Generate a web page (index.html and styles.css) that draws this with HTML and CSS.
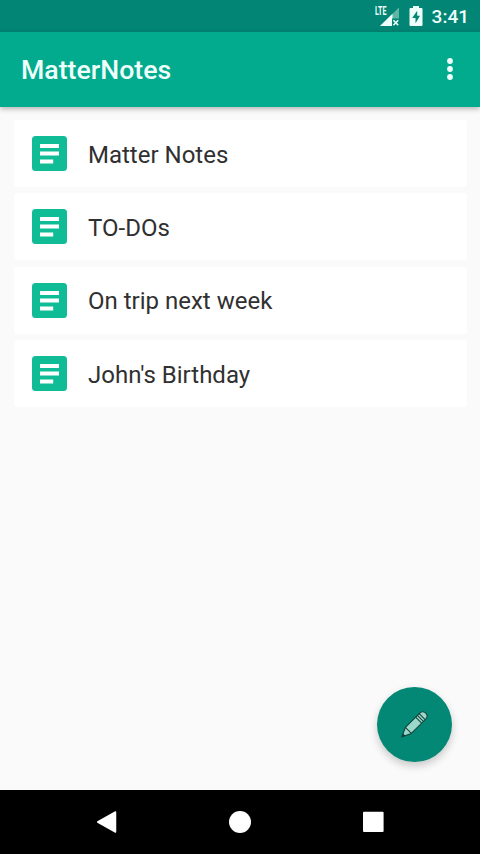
FILE: index.html
```html
<!DOCTYPE html>
<html lang="en">
<head>
<meta charset="utf-8">
<title>MatterNotes</title>
<link rel="stylesheet" href="styles.css">
</head>
<body>
<svg class="defs" width="0" height="0" aria-hidden="true">
  <symbol id="note" viewBox="0 0 35 35">
    <rect width="35" height="35" rx="3.5" fill="#0fbc95"/>
    <path d="M8 8h19v4H8zM8 15.6h19v4H8zM8 23.4h13.2v4H8z" fill="#fff"/>
  </symbol>
</svg>
<div class="screen">
  <div class="status">
    <span class="signal">
      <svg width="26" height="22" viewBox="0 0 26 22">
        <path d="M24 2.5V21H5z" fill="#5fb5a6"/>
        <path d="M17.5 8.8v12.2H5z" fill="#effffb"/>
        <path d="M17 13.5h7.5V21H17z" fill="#028574"/>
        <path d="M18.4 15.2l4.8 5M23.2 15.2l-4.8 5" stroke="#effffb" stroke-width="1.6"/>
      </svg>
      <span class="lte">LTE</span>
    </span>
    <svg class="battery" width="14" height="20" viewBox="0 0 14 20">
      <path d="M4 0h6v2h2.5q1 0 1 1v16q0 1-1 1h-11q-1 0-1-1V3q0-1 1-1H4z" fill="#effffb"/>
      <path d="M8.2 4.8L3.2 12h3.3v5.2L11 9.8H8.2z" fill="#028574"/>
    </svg>
    <span class="clock">3:41</span>
  </div>
  <header class="appbar">
    <h1>MatterNotes</h1>
    <svg class="more" width="8" height="24" viewBox="0 0 8 24" fill="#effffb">
      <circle cx="4" cy="4" r="2.9"/><circle cx="4" cy="12" r="2.9"/><circle cx="4" cy="20" r="2.9"/>
    </svg>
  </header>
  <main class="content">
    <ul class="notes">
      <li class="note"><svg class="icon"><use href="#note"/></svg><span>Matter Notes</span></li>
      <li class="note"><svg class="icon"><use href="#note"/></svg><span>TO-DOs</span></li>
      <li class="note"><svg class="icon"><use href="#note"/></svg><span>On trip next week</span></li>
      <li class="note"><svg class="icon"><use href="#note"/></svg><span>John's Birthday</span></li>
    </ul>
    <button class="fab" aria-label="New note">
      <svg width="30" height="30" viewBox="0 0 30 30">
        <g transform="translate(2 26.8) rotate(-45)" stroke="#143f38" stroke-width="1" stroke-linejoin="round">
          <path d="M0 0L9-4.2H29Q33.5-4.2 33.5 0T29 4.2H9z" fill="#9ad8ca"/>
          <path d="M9-4.2V4.2M23.5-4.2V4.2M26-4.2V4.2M28.5-4.2V4.2" fill="none"/>
          <path d="M0 0L2.6-1.2V1.2z" fill="#143f38"/>
        </g>
      </svg>
    </button>
  </main>
  <nav class="navbar">
    <svg width="22" height="24" viewBox="0 0 22 24"><path d="M1.7 12L19.5 2V22z" fill="#fff" stroke="#fff" stroke-width="1.5" stroke-linejoin="round"/></svg>
    <svg width="22" height="24" viewBox="0 0 22 24"><circle cx="11" cy="12" r="11" fill="#fff"/></svg>
    <svg width="22" height="24" viewBox="0 0 22 24"><rect x="1" y="1.7" width="20.6" height="20.3" rx="1" fill="#fff"/></svg>
  </nav>
</div>
</body>
</html>
```
FILE: styles.css
```css
* {
  box-sizing: border-box;
}

body {
  margin: 0;
  font-family: Roboto, "Liberation Sans", sans-serif;
}

svg {
  display: block;
  flex: none;
}

.defs {
  position: absolute;
}

.screen {
  display: flex;
  flex-direction: column;
  height: 854px;
  overflow: hidden;
  background: #fafafa;
}

.status {
  display: flex;
  align-items: center;
  justify-content: flex-end;
  height: 32px;
  padding-right: 11px;
  background: #028574;
  color: #effffb;
}

.signal {
  position: relative;
  margin-right: 8px;
}

.lte {
  position: absolute;
  left: 0;
  top: 0;
  font-size: 12px;
  line-height: 12px;
  font-weight: 700;
  transform: scaleX(0.59);
  transform-origin: left;
}

.battery {
  margin-right: 9px;
}

.clock {
  padding-top: 1px;
  font-size: 19px;
  font-weight: 500;
  line-height: 31px;
}

.appbar {
  display: flex;
  align-items: center;
  justify-content: space-between;
  height: 74.5px;
  padding: 0 26px 0 21px;
  background: #02ab8d;
  color: #effffb;
  box-shadow: 0 2px 5px rgba(0, 0, 0, 0.28);
  z-index: 1;
}

h1 {
  margin: 2px 0 0;
  font-size: 26.7px;
  font-weight: 500;
  line-height: 32px;
}

.content {
  position: relative;
  flex: 1;
  padding: 13.5px 13.5px 0;
}

.notes {
  display: grid;
  gap: 6.4px;
  margin: 0;
  padding: 0;
  list-style: none;
}

.note {
  display: flex;
  align-items: center;
  gap: 21px;
  height: 67px;
  padding-left: 18.5px;
  border-radius: 3px;
  background: #fff;
  color: #303030;
  font-size: 24px;
}

.note span {
  padding-top: 2px;
}

.icon {
  width: 35px;
  height: 35px;
}

.fab {
  position: absolute;
  right: 28px;
  bottom: 28px;
  display: grid;
  place-items: center;
  width: 75px;
  height: 75px;
  padding: 0;
  border: 0;
  border-radius: 50%;
  background: #028875;
  box-shadow: 0 4px 9px rgba(0, 0, 0, 0.2);
}

.navbar {
  display: flex;
  align-items: center;
  justify-content: space-between;
  height: 64px;
  padding: 0 96px;
  background: #000;
}
```
